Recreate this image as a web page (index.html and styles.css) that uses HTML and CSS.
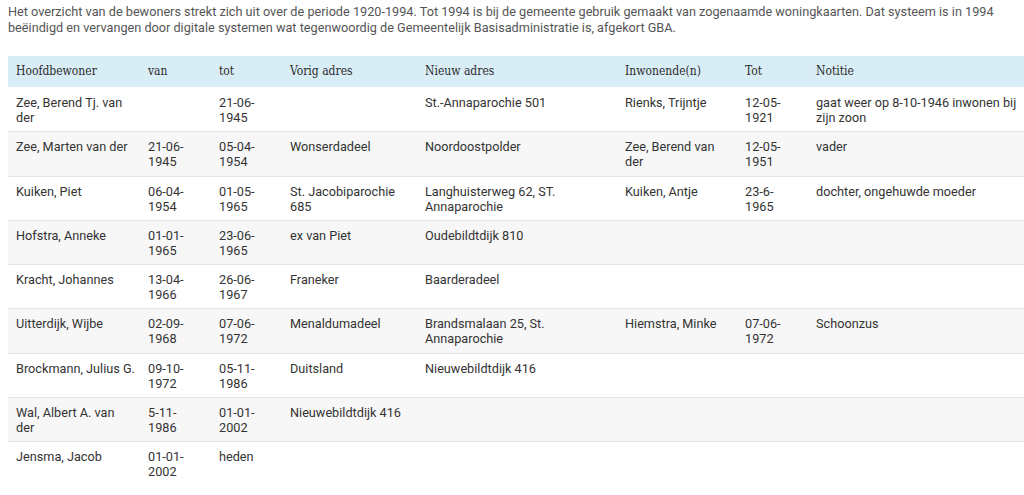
FILE: index.html
```html
<!DOCTYPE html>
<html lang="nl">
<head>
<meta charset="utf-8">
<title>Bewoners</title>
<link rel="stylesheet" href="styles.css">
</head>
<body>
<p class="intro">Het overzicht van de bewoners strekt zich uit over de periode 1920-1994. Tot 1994 is bij de gemeente gebruik gemaakt van zogenaamde woningkaarten. Dat systeem is in 1994 beëindigd en vervangen door digitale systemen wat tegenwoordig de Gemeentelijk Basisadministratie is, afgekort GBA.</p>
<table class="residents">
<colgroup>
<col class="c-name"><col class="c-date"><col class="c-date"><col class="c-prev"><col class="c-new"><col class="c-co"><col class="c-date"><col class="c-note">
</colgroup>
<thead>
<tr><th>Hoofdbewoner</th><th>van</th><th>tot</th><th>Vorig adres</th><th>Nieuw adres</th><th>Inwonende(n)</th><th>Tot</th><th>Notitie</th></tr>
</thead>
<tbody>
<tr><td class="name">Zee, Berend Tj. van der</td><td></td><td>21-06-1945</td><td></td><td>St.-Annaparochie 501</td><td>Rienks, Trijntje</td><td>12-05-1921</td><td class="note">gaat weer op 8-10-1946 inwonen bij zijn zoon</td></tr>
<tr><td class="name">Zee, Marten van der</td><td>21-06-1945</td><td>05-04-1954</td><td>Wonserdadeel</td><td>Noordoostpolder</td><td>Zee, Berend van der</td><td>12-05-1951</td><td class="note">vader</td></tr>
<tr><td class="name">Kuiken, Piet</td><td>06-04-1954</td><td>01-05-1965</td><td>St. Jacobiparochie 685</td><td>Langhuisterweg 62, ST. Annaparochie</td><td>Kuiken, Antje</td><td>23-6-1965</td><td class="note">dochter, ongehuwde moeder</td></tr>
<tr><td class="name">Hofstra, Anneke</td><td>01-01-1965</td><td>23-06-1965</td><td>ex van Piet</td><td>Oudebildtdijk 810</td><td></td><td></td><td class="note"></td></tr>
<tr><td class="name">Kracht, Johannes</td><td>13-04-1966</td><td>26-06-1967</td><td>Franeker</td><td>Baarderadeel</td><td></td><td></td><td class="note"></td></tr>
<tr><td class="name">Uitterdijk, Wijbe</td><td>02-09-1968</td><td>07-06-1972</td><td>Menaldumadeel</td><td>Brandsmalaan 25, St. Annaparochie</td><td>Hiemstra, Minke</td><td>07-06-1972</td><td class="note">Schoonzus</td></tr>
<tr><td class="name">Brockmann, Julius G.</td><td>09-10-1972</td><td>05-11-1986</td><td>Duitsland</td><td>Nieuwebildtdijk 416</td><td></td><td></td><td class="note"></td></tr>
<tr><td class="name">Wal, Albert A. van der</td><td>5-11-1986</td><td>01-01-2002</td><td>Nieuwebildtdijk 416</td><td></td><td></td><td></td><td class="note"></td></tr>
<tr><td class="name">Jensma, Jacob</td><td>01-01-2002</td><td>heden</td><td></td><td></td><td></td><td></td><td class="note"></td></tr>
</tbody>
</table>
</body>
</html>
```
FILE: styles.css
```css
html, body {
  margin: 0;
  padding: 0;
  background: #ffffff;
}
body {
  padding: 4px 0 0 8px;
  font-family: Roboto, "Liberation Sans", sans-serif;
  font-size: 12.7px;
  line-height: 15px;
  color: #333333;
}
.intro {
  margin: 0 0 20px 0;
  color: #555555;
  line-height: 16px;
  padding-right: 8px;
}
.residents {
  border-collapse: collapse;
  table-layout: fixed;
  width: 1016px;
}
.c-name { width: 132px; }
.c-date { width: 71px; }
.c-prev { width: 135px; }
.c-new { width: 200px; }
.c-co { width: 120px; }
.c-note { width: 216px; }
.residents th {
  background: #d9edf7;
  font-family: "DejaVu Serif Condensed", "DejaVu Serif", "Liberation Serif", serif;
  font-weight: normal;
  font-size: 12px;
  text-align: left;
  padding: 8px 4px 8px 8px;
  line-height: 15px;
  color: #2b2b2b;
}
.residents td {
  vertical-align: top;
  padding: 7px 8px 6.3px 8px;
  line-height: 15px;
  border-top: 1px solid #e4e4e4;
}
.residents td.name {
  padding-right: 4.2px;
}
.residents td.note {
  padding-right: 3px;
}
.residents tbody tr:first-child td {
  border-top-color: #ffffff;
}
.residents tbody tr:nth-child(even) td {
  background: #f7f7f7;
}
```
